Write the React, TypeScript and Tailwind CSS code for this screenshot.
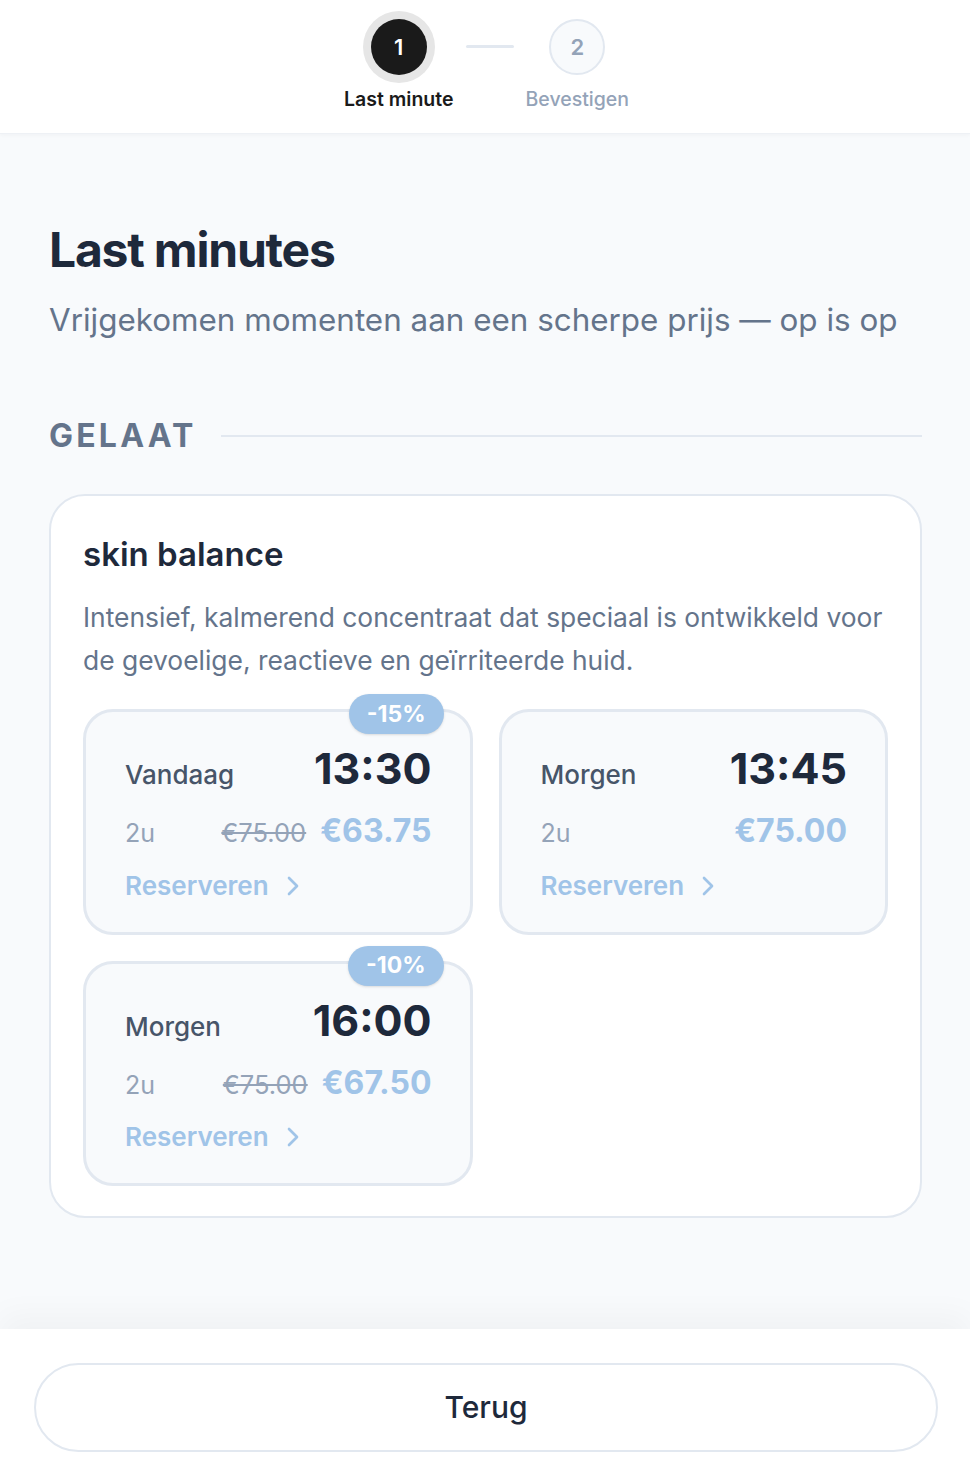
import { ChevronRight } from "lucide-react";

type Slot = {
  dag: string;
  tijd: string;
  duur: string;
  prijs: string;
  oudePrijs?: string;
  korting?: string;
};

const slots: Slot[] = [
  { dag: "Vandaag", tijd: "13:30", duur: "2u", prijs: "€63.75", oudePrijs: "€75.00", korting: "-15%" },
  { dag: "Morgen", tijd: "13:45", duur: "2u", prijs: "€75.00" },
  { dag: "Morgen", tijd: "16:00", duur: "2u", prijs: "€67.50", oudePrijs: "€75.00", korting: "-10%" },
];

const SlotCard = ({ slot }: { slot: Slot }) => (
  <div className="relative rounded-[30px] border-[3px] border-[#e2e8f0] bg-[#f8fafc] pt-8 pr-[38px] pb-7 pl-[39px]">
    {slot.korting && (
      <span className="absolute -top-[18px] right-[26px] flex h-10 items-center rounded-full bg-[#a0c4e8] px-[18px] text-[23px] font-bold text-white shadow-sm">
        {slot.korting}
      </span>
    )}
    <div className="flex items-baseline justify-between">
      <span className="text-[26px] font-medium text-[#475569]">{slot.dag}</span>
      <span className="text-[43px] leading-[48px] font-bold text-[#1e293b]">{slot.tijd}</span>
    </div>
    <div className="mt-[17px] flex items-baseline justify-between">
      <span className="text-[25px] text-[#94a3b8]">{slot.duur}</span>
      <div className="flex items-baseline gap-[14px]">
        {slot.oudePrijs && (
          <span className="text-[25.5px] text-[#94a3b8] line-through">{slot.oudePrijs}</span>
        )}
        <span className="text-[32px] leading-10 font-bold text-[#a0c4e8]">{slot.prijs}</span>
      </div>
    </div>
    <div className="mt-[15px] flex items-center gap-2 text-[26px] leading-9 font-semibold text-[#a0c4e8]">
      Reserveren
      <ChevronRight className="h-8 w-8" strokeWidth={2} />
    </div>
  </div>
);

export default function App() {
  return (
    <div className="flex min-h-screen flex-col bg-[#f8fafc] font-['Inter',sans-serif]">
      {/* Stappen */}
      <header className="border-b border-[#eef1f5] bg-white pt-[19px] pb-[20px] shadow-[0_1px_4px_rgba(15,23,42,0.04)]">
        <div className="flex items-start justify-center gap-3 pl-[3px]">
          <div className="flex flex-col items-center gap-[10px]">
            <div className="flex h-14 w-14 items-center justify-center rounded-full bg-[#1a1a1a] text-[22px] font-semibold text-white ring-8 ring-[#e6e6e6]">
              1
            </div>
            <span className="text-[19.5px] leading-7 font-semibold text-[#1a1a1a]">Last minute</span>
          </div>
          <div className="mt-[26px] h-[3px] w-12 rounded-full bg-[#e2e8f0]" />
          <div className="flex flex-col items-center gap-[10px]">
            <div className="flex h-14 w-14 items-center justify-center rounded-full border-2 border-[#e2e8f0] bg-[#f8fafc] text-[22px] font-semibold text-[#94a3b8]">
              2
            </div>
            <span className="text-[19.5px] leading-7 font-medium text-[#94a3b8]">Bevestigen</span>
          </div>
        </div>
      </header>

      <main className="flex-1 pt-[92px] pr-[48px] pb-10 pl-[49px]">
        <h1 className="text-[48px] leading-[48px] font-bold tracking-tight text-[#1e293b]">Last minutes</h1>
        <p className="mt-[24px] text-[31.4px] leading-[45px] text-[#64748b]">
          Vrijgekomen momenten aan een scherpe prijs — op is op
        </p>

        <div className="mt-[73px] flex items-center gap-[24px]">
          <h2 className="text-[32px] leading-10 font-bold tracking-widest text-[#64748b]">GELAAT</h2>
          <div className="h-[2px] flex-1 bg-[#e2e8f0]" />
        </div>

        <div className="mt-[38px] rounded-[36px] border-2 border-[#e2e8f0] bg-white px-8 pt-10 pb-[30px]">
          <h3 className="text-[33px] leading-9 font-semibold text-[#1e293b]">skin balance</h3>
          <p className="mt-[24px] text-[26.4px] leading-[43px] text-[#64748b]">
            Intensief, kalmerend concentraat dat speciaal is ontwikkeld voor de gevoelige, reactieve en geïrriteerde huid.
          </p>
          <div className="mt-[27px] grid grid-cols-2 gap-[26px]">
            {slots.map((slot, index) => (
              <SlotCard key={index} slot={slot} />
            ))}
          </div>
        </div>
      </main>

      <footer className="bg-white pt-[34px] pr-[32px] pb-8 pl-[34px] shadow-[0_-14px_30px_rgba(15,23,42,0.035)]">
        <button className="flex h-[89px] w-full items-center justify-center rounded-full border-2 border-[#e2e8f0] bg-white text-[30px] font-medium text-[#1e293b]">
          Terug
        </button>
      </footer>
    </div>
  );
}
